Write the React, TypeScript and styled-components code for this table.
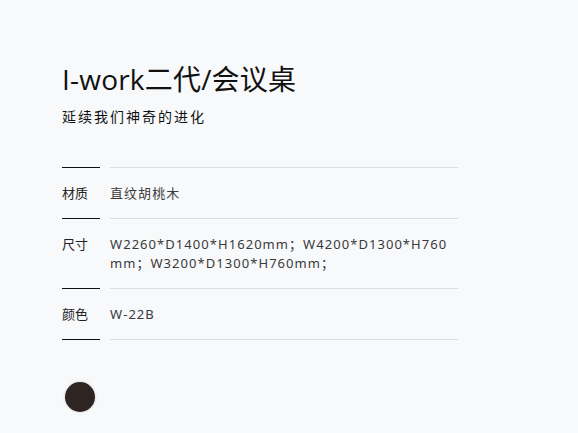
import React from 'react';
import styled, { createGlobalStyle } from 'styled-components';

type Spec = {
  label: string;
  value: string;
};

const specs: Spec[] = [
  { label: '材质', value: '直纹胡桃木' },
  { label: '尺寸', value: 'W2260*D1400*H1620mm；W4200*D1300*H760mm；W3200*D1300*H760mm；' },
  { label: '颜色', value: 'W-22B' },
];

const App = () => {
  return (
    <>
      <GlobalStyle />
      <Page>
        <Title>I-work二代/会议桌</Title>
        <Subtitle>延续我们神奇的进化</Subtitle>
        <SpecTable>
          {specs.map(spec => (
            <Row key={spec.label}>
              <Label>{spec.label}</Label>
              <Value>{spec.value}</Value>
            </Row>
          ))}
        </SpecTable>
        <Swatch color="#2e2422" />
      </Page>
    </>
  );
};

const GlobalStyle = createGlobalStyle`
  html, body {
    margin: 0;
    padding: 0;
    background: #f8f9fb;
  }

  body {
    font-family: 'Noto Sans', 'Noto Sans CJK SC', sans-serif;
  }
`;

const Page = styled.div`
  width: 578px;
  min-height: 433px;
  box-sizing: border-box;
  padding: 61px 0 0 62px;
`;

const Title = styled.h1`
  margin: 0;
  font-family: 'Open Sans', 'Noto Sans CJK SC', sans-serif;
  font-size: 28px;
  line-height: 36px;
  font-weight: 400;
  letter-spacing: 0.2px;
  color: #111111;
`;

const Subtitle = styled.p`
  margin: 10px 0 0;
  font-size: 14px;
  line-height: 20px;
  letter-spacing: 2px;
  color: #111111;
`;

const SpecTable = styled.div`
  width: 396px;
  margin-top: 40px;
`;

const Row = styled.div`
  display: grid;
  grid-template-columns: 38px 1fr;
  column-gap: 10px;
  font-size: 13px;
  line-height: 18.5px;

  & > * {
    border-top: 1px solid;
    padding: 16px 0 15.5px;
  }

  &:last-child > * {
    border-bottom: 1px solid;
  }
`;

const Label = styled.div`
  color: #222222;
  border-color: #111111 !important;
`;

const Value = styled.div`
  color: #3a3a3a;
  letter-spacing: 1.05px;
  word-break: break-all;
  border-color: #dddddd !important;
`;

const Swatch = styled.div<{ color: string }>`
  width: 30px;
  height: 30px;
  margin: 42px 0 0 3px;
  border-radius: 50%;
  background: ${props => props.color};
  box-shadow: 0 0 3px rgba(0, 0, 0, 0.18);
`;

export default App;
